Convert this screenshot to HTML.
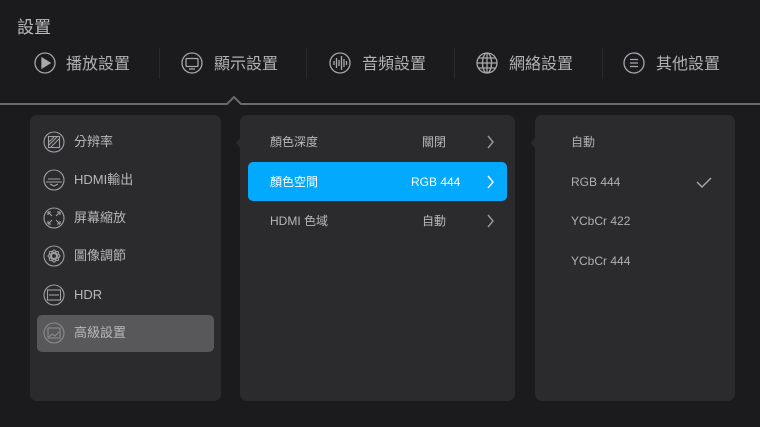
<!DOCTYPE html>
<html><head><meta charset="utf-8"><style>
*{margin:0;padding:0;box-sizing:border-box}
body{width:760px;height:427px;background:#1b1b1e;position:relative;overflow:hidden;font-family:"Liberation Sans","Noto Sans CJK TC",sans-serif;color:#b4b4b6}
.a{position:absolute}
.title{left:17px;top:13px;font-size:17px;color:#bdbdbf}
.tab{top:54px;font-size:16px;color:#b2b2b4;line-height:22px;white-space:nowrap}
.sep{top:48px;width:1px;height:31px;background:#2a2a2d}
.panel{top:115px;height:286px;background:#2b2b2e;border-radius:7px}
.lt{font-size:13px;color:#b8b8ba;line-height:16px;white-space:nowrap}
svg{position:absolute;overflow:visible}
</style></head><body>
<div class="a title">設置</div>

<svg style="left:0;top:0" width="760" height="110" fill="none" stroke="#a8a8aa" stroke-width="1.3">
<circle cx="45" cy="63" r="10"/><path d="M42 58v10l8-5z" fill="#a8a8aa"/>
<circle cx="192" cy="63" r="10"/><rect x="186" y="58.5" width="12" height="8" rx="1"/><path d="M189 69h6"/>
<circle cx="340" cy="63" r="10"/><path d="M334 61v4M336.5 58v10M339 60v6M341.5 56v14M344 59v8M346.5 61v4"/>
<circle cx="487" cy="63" r="10"/><ellipse cx="487" cy="63" rx="4.5" ry="10"/><path d="M477 63h20M487 53v20M478.5 58h17M478.5 68h17"/>
<circle cx="634" cy="63" r="10"/><path d="M630 59.5h8M630 63h8M630 66.5h8"/>
<path d="M0 104H227l7-7 7 7H760" stroke="#6a6a6c" stroke-width="2"/>
</svg>
<div class="a tab" style="left:66px">播放設置</div>
<div class="a sep" style="left:159px"></div>
<div class="a tab" style="left:214px">顯示設置</div>
<div class="a sep" style="left:306px"></div>
<div class="a tab" style="left:362px">音頻設置</div>
<div class="a sep" style="left:454px"></div>
<div class="a tab" style="left:509px">網絡設置</div>
<div class="a sep" style="left:602px"></div>
<div class="a tab" style="left:656px">其他設置</div>

<div class="a panel" style="left:30px;width:191px"></div>
<div class="a panel" style="left:240px;width:275px"></div>
<div class="a panel" style="left:535px;width:200px"></div>
<svg style="left:0;top:0" width="760" height="427"><path d="M241 137l-5 6 5 6z" fill="#2b2b2e"/><path d="M536 137l-5 6 5 6z" fill="#2b2b2e"/></svg>

<div class="a" style="left:37px;top:315px;width:177px;height:37px;background:#58585a;border-radius:5px"></div>
<svg style="left:0;top:0" width="240" height="427" fill="none" stroke="#a0a0a2" stroke-width="1.1">
<circle cx="54" cy="142" r="10"/><rect x="48.5" y="136.5" width="11" height="11"/><path d="M49 142l5-5M49 145l8-8M51 147l8-8"/>
<circle cx="54" cy="180" r="10"/><path d="M46 182h16M48 179h12M50 184l4 2 4-2" />
<circle cx="54" cy="218" r="10"/><path d="M48 212l4 4M48 212h3M48 212v3M60 212l-4 4M60 212h-3M60 212v3M48 224l4-4M48 224h3M48 224v-3M60 224l-4-4M60 224h-3M60 224v-3"/>
<circle cx="54" cy="256" r="10"/><ellipse cx="54" cy="256" rx="2.5" ry="6"/><ellipse cx="54" cy="256" rx="6" ry="2.5"/><ellipse cx="54" cy="256" rx="2.5" ry="6" transform="rotate(45 54 256)"/><ellipse cx="54" cy="256" rx="2.5" ry="6" transform="rotate(-45 54 256)"/>
<circle cx="54" cy="295" r="10"/><rect x="47.5" y="290" width="13" height="10"/><path d="M49 295h10"/>
<circle cx="54" cy="333" r="10" stroke="#8a8a8c"/><rect x="48" y="328" width="12" height="10" stroke="#8a8a8c"/><path d="M49 337l3-3 3 2 4-4" stroke="#8a8a8c"/>
</svg>
<div class="a lt" style="left:74px;top:134px">分辨率</div>
<div class="a lt" style="left:74px;top:172px">HDMI輸出</div>
<div class="a lt" style="left:74px;top:210px">屏幕縮放</div>
<div class="a lt" style="left:74px;top:248px">圖像調節</div>
<div class="a lt" style="left:74px;top:287px">HDR</div>
<div class="a lt" style="left:74px;top:325px">高級設置</div>

<div class="a" style="left:248px;top:162px;width:259px;height:39px;background:#03a9fc;border-radius:5px"></div>
<div class="a lt" style="left:270px;top:134px;font-size:12px">顏色深度</div>
<div class="a lt" style="left:422px;top:134px;font-size:12px">關閉</div>
<div class="a lt" style="left:270px;top:174px;font-size:12px;color:#fff">顏色空間</div>
<div class="a lt" style="left:411px;top:174px;font-size:12px;color:#fff">RGB 444</div>
<div class="a lt" style="left:270px;top:213px;font-size:12px">HDMI 色域</div>
<div class="a lt" style="left:422px;top:213px;font-size:12px">自動</div>
<svg style="left:0;top:0" width="760" height="427" fill="none" stroke-width="1.4">
<path d="M488 136l5 6-5 6" stroke="#9a9a9c"/>
<path d="M488 176l5 6-5 6" stroke="#fff"/>
<path d="M488 215l5 6-5 6" stroke="#9a9a9c"/>
<path d="M697 182l5 5 9-9" stroke="#a8a8aa"/>
</svg>
<div class="a lt" style="left:571px;top:134px;font-size:12px;color:#b0b0b2">自動</div>
<div class="a lt" style="left:571px;top:174px;font-size:12px;color:#b0b0b2">RGB 444</div>
<div class="a lt" style="left:571px;top:213px;font-size:12px;color:#b0b0b2">YCbCr 422</div>
<div class="a lt" style="left:571px;top:253px;font-size:12px;color:#b0b0b2">YCbCr 444</div>
</body></html>
